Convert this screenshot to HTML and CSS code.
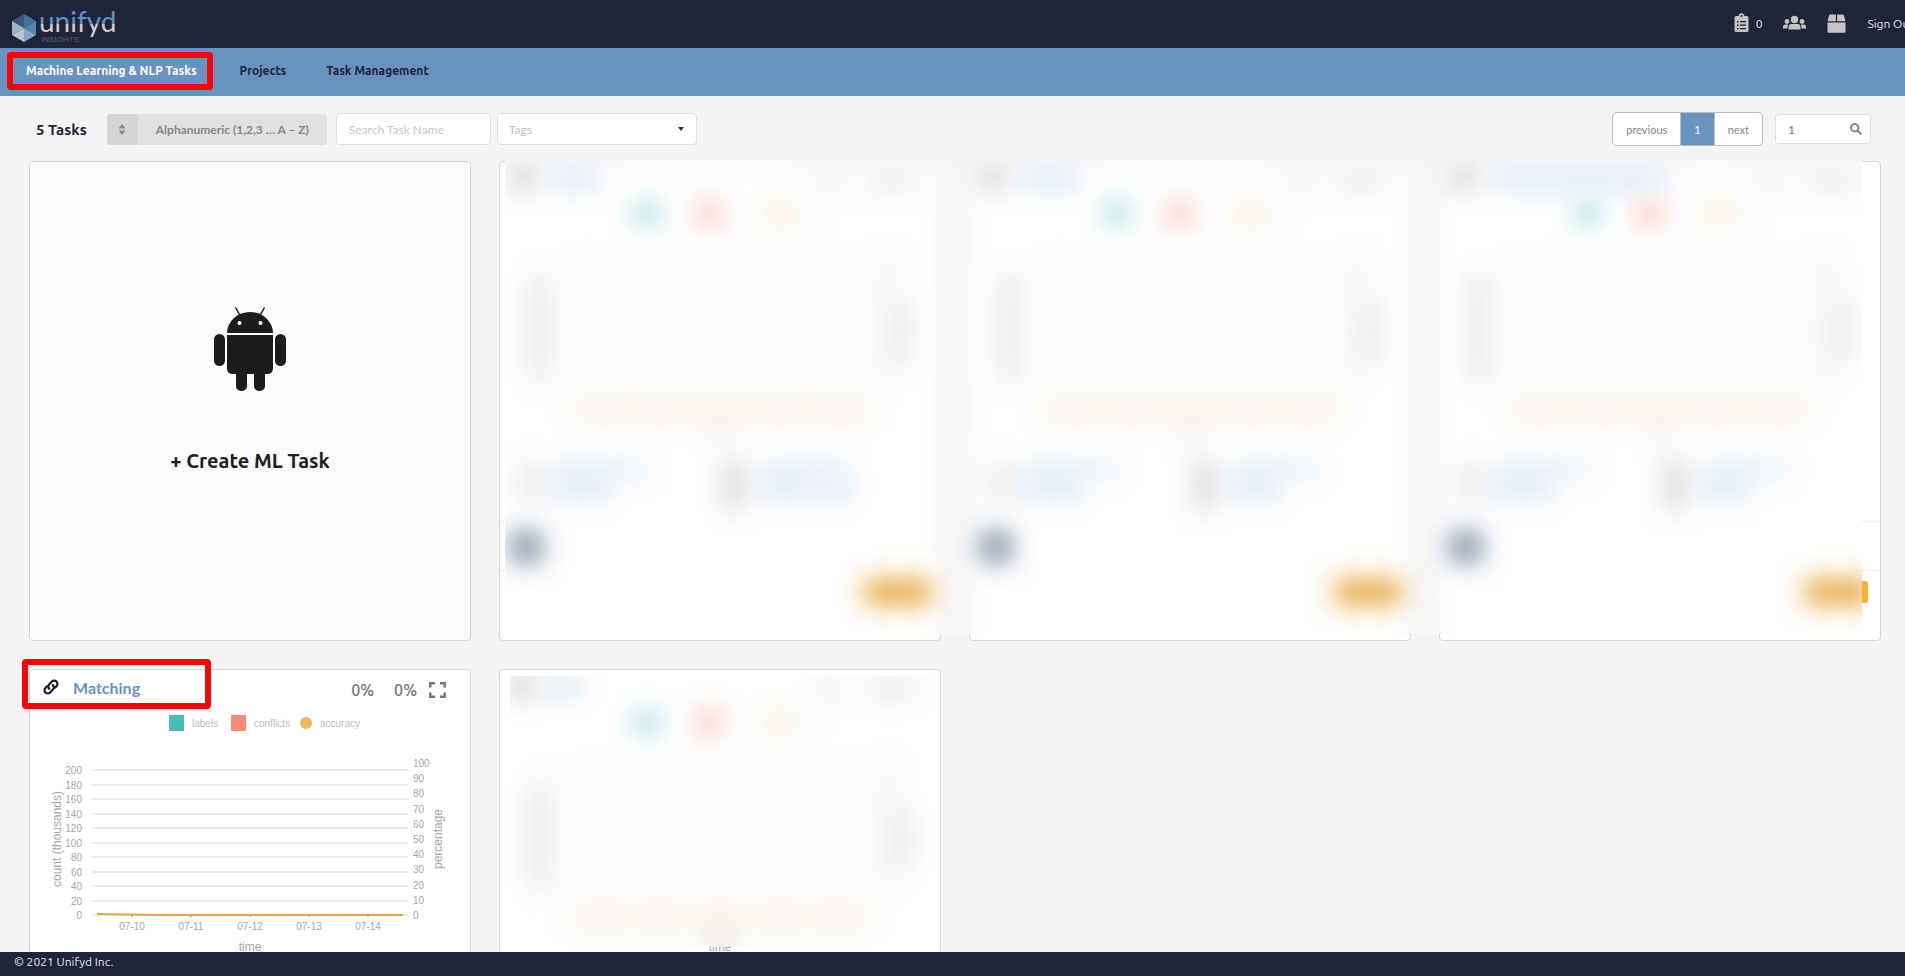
FILE: index.html
```html
<!DOCTYPE html>
<html lang="en">
<head>
<meta charset="utf-8">
<title>Unifyd Insights</title>
<link rel="stylesheet" href="styles.css">
</head>
<body>
<header class="topbar">
  <a class="logo" href="#" aria-label="Unifyd Insights">
    <svg width="110" height="44" viewBox="0 0 110 44">
      <defs>
        <linearGradient id="two-tone" gradientUnits="userSpaceOnUse" x1="0" y1="0" x2="0" y2="44">
          <stop offset="0.55" stop-color="#5b93c5"/><stop offset="0.55" stop-color="#cfcfd1"/>
        </linearGradient>
      </defs>
      <path fill="#34597c" d="M16 14v14L4 21z"/><path fill="#417199" d="M16 14l12 7-12 7z"/>
      <path fill="#a3b3c8" d="M4 21l12 7-12 7z"/><path fill="#5686b0" d="M28 21v14l-12-7z"/>
      <path fill="#b9c4d3" d="M4 35l12-7v14z"/><path fill="#86a5c5" d="M28 35l-12 7V28z"/>
      <text class="logo-name" x="31" y="32" fill="url(#two-tone)">unifyd</text>
      <text class="logo-sub" x="33" y="42">INSIGHTS</text>
    </svg>
  </a>
  <div class="actions">
    <a class="action count" href="#" aria-label="Tasks">
      <svg width="15" height="20" viewBox="0 0 15 20"><path fill="#c4c4c4" fill-rule="evenodd" d="M2 3h2.700a2.800 2.800 0 0 1 5.600 0H13q1.500 0 1.500 1.500v13Q14.500 19 13 19H2Q.5 19 .5 17.500v-13Q.5 3 2 3zM7.500 2a1 1 0 1 0 0 2 1 1 0 0 0 0-2zM3 8v1.500h1.500V8zM6 8v1.300h6V8zM3 11.500V13h1.500v-1.500zM6 11.500v1.300h6v-1.300zM3 15v1.500h1.500V15zM6 15v1.300h6V15z"/></svg>
      <span>0</span>
    </a>
    <a class="action" href="#" aria-label="Users">
      <svg width="23" height="16" viewBox="0 0 23 16"><g fill="#c4c4c4"><circle cx="11.500" cy="4.500" r="3.700"/><circle cx="4" cy="6.500" r="2.400"/><circle cx="19" cy="6.500" r="2.400"/><path d="M5.500 14.500V12q0-3 3-3h6q3 0 3 3v2.500zM0 13.500V12q0-2.500 2.500-2.500H5Q4.500 11 4.500 13.500zM23 13.500V12q0-2.500-2.500-2.500H18q.5 1.500.5 4z"/></g></svg>
    </a>
    <a class="action" href="#" aria-label="Packages">
      <svg width="19" height="19" viewBox="0 0 19 19"><path fill="#c4c4c4" d="M3.300.5h5.600v6.700H.5l1.500-5.600Q2.300.5 3.300.5zM10.100.5h5.600q1 0 1.300 1.100l1.500 5.600h-8.400zM.5 8.400h18v9q0 1.300-1.300 1.300H1.800q-1.300 0-1.300-1.300z"/></svg>
    </a>
    <a class="action" href="#">Sign Out</a>
  </div>
</header>

<nav class="tabs">
  <div class="tab-mark"><a class="tab active" href="#">Machine Learning &amp; NLP Tasks</a></div>
  <a class="tab" href="#">Projects</a>
  <a class="tab" href="#">Task Management</a>
</nav>

<main class="page">
  <div class="toolbar">
    <h1 class="total">5 Tasks</h1>
    <button class="sort" type="button">
      <span class="sort-icon"><svg width="8" height="11" viewBox="0 0 8 11"><path fill="#868788" d="M4 0l3.500 4.500h-7zM4 11L.5 6.500h7z"/></svg></span>
      <span class="sort-label">Alphanumeric (1,2,3 … A – Z)</span>
    </button>
    <input class="field search" type="text" placeholder="Search Task Name" aria-label="Search Task Name">
    <div class="select-wrap">
      <select class="field tags" aria-label="Tags"><option>Tags</option></select>
      <svg class="caret" width="6" height="5" viewBox="0 0 6 5"><path fill="#333" d="M0 0h6L3 4z"/></svg>
    </div>
    <div class="pager">
      <button type="button">previous</button>
      <button type="button" class="current">1</button>
      <button type="button">next</button>
    </div>
    <div class="goto">
      <input class="field" type="text" value="1" aria-label="Page number">
      <svg class="lens" width="12" height="12" viewBox="0 0 12 12"><path fill="none" stroke="#868686" stroke-width="2" d="M8.500 4.750a3.750 3.750 0 1 1-7.500 0 3.750 3.750 0 0 1 7.500 0zM7.500 7.500l3.800 3.800"/></svg>
    </div>
  </div>

  <svg class="symbols" width="0" height="0" aria-hidden="true">
    <defs>
      <filter id="soft" filterUnits="userSpaceOnUse" x="440" y="80" width="560" height="640" color-interpolation-filters="sRGB"><feGaussianBlur stdDeviation="13"/></filter>
      <filter id="edge" filterUnits="userSpaceOnUse" x="400" y="60" width="1600" height="740" color-interpolation-filters="sRGB"><feGaussianBlur stdDeviation="13"/></filter>
      <g id="hidden-chart">
        <rect x="570" y="255" width="316" height="140" fill="#fcfcfc" filter="url(#soft)"/>
        <g filter="url(#soft)">
          <rect x="637" y="204" width="20" height="20" fill="#7fd0c8"/>
          <rect x="699" y="204" width="20" height="20" fill="#f8aaa4"/>
          <circle cx="776" cy="214" r="9" fill="#f6dcab"/>
          <rect x="785" y="210" width="34" height="8" fill="#eee"/>
        </g>
        <g filter="url(#soft)" fill="#e3e3e3">
          <rect x="818" y="174" width="23" height="14"/>
          <rect x="866" y="174" width="50" height="14"/>
          <path d="M529 285h16v85h-16zM536 270h12v115h-12z"/>
          <rect x="884" y="250" width="12" height="130" fill="#f2f2f2"/>
          <rect x="895" y="302" width="14" height="58"/>
        </g>
        <g filter="url(#soft)">
          <rect x="568" y="402" width="306" height="16" fill="#faf2e3"/>
          <path fill="#e9e4dc" d="M588 410h28v9h-28zM647 410h28v9h-28zM706 410h28v9h-28zM765 410h28v9h-28zM824 410h28v9h-28zM708 429h24v9h-24z"/>
        </g>
      </g>
      <g id="hidden-card">
        <use href="#hidden-chart"/>
        <rect x="512" y="168" width="22" height="20" fill="#c0c0c0" filter="url(#soft)"/>
        <g filter="url(#soft)">
          <rect x="524" y="462" width="13" height="40" fill="#dadada"/>
          <rect x="727" y="460" width="14" height="50" fill="#c4c4c4"/>
          <path fill="#e2ebf5" d="M552 463h100v14h-40v25h-60zM759 463h92v14h-42v25h-50z"/>
        </g>
        <rect x="510" y="531" width="32" height="32" rx="3" fill="#8090a8" filter="url(#soft)"/>
        <rect x="864" y="579" width="68" height="26" rx="3" fill="#e7a943" filter="url(#soft)"/>
      </g>
    </defs>
  </svg>

  <section class="cards">
    <a class="card create" href="#">
      <svg width="74" height="86" viewBox="0 0 74 86">
        <g fill="#1b1c1d"><path d="M14 26a23 21 0 0 1 46 0z"/><path d="M14 28h46v33q0 6-6 6H20q-6 0-6-6z"/><rect x="1" y="27" width="11" height="32" rx="5.500"/><rect x="62" y="27" width="11" height="32" rx="5.500"/><rect x="23" y="58" width="11" height="26" rx="5"/><rect x="41" y="58" width="11" height="26" rx="5"/></g>
        <path stroke="#1b1c1d" stroke-width="1.500" d="M22.500.5l4.500 8M51.500.5l-4.500 8"/>
        <g fill="#fff"><circle cx="26.500" cy="16" r="2"/><circle cx="47.500" cy="16" r="2"/></g>
      </svg>
      <span>+ Create ML Task</span>
    </a>
    <article class="card second"><div class="card-row"></div><div class="card-foot"></div></article>
    <article class="card third"><div class="card-row"></div><div class="card-foot"></div></article>
    <article class="card fourth"><div class="card-row"></div><div class="card-foot"><span class="badge"></span></div></article>

    <div class="veil wide">
      <svg viewBox="505 160 1357 474" preserveAspectRatio="none" aria-hidden="true">
        <rect x="505" y="160" width="1357" height="474" fill="#f4f4f4"/>
        <g fill="#fff" filter="url(#edge)">
          <rect x="440" y="162" width="501" height="560"/><rect x="969" y="162" width="442" height="560"/><rect x="1439" y="162" width="500" height="560"/>
        </g>
        <use href="#hidden-card"/>
        <use href="#hidden-card" x="470"/>
        <use href="#hidden-card" x="940"/>
        <g filter="url(#edge)">
          <path fill="#cfdeef" d="M550 171h48v16h-48zM1020 171h58v16h-58zM1492 171h174v16h-174z"/>
          <rect x="809" y="477" width="42" height="25" fill="#e2ebf5"/>
        </g>
      </svg>
    </div>

    <article class="card match">
      <div class="card-head">
        <svg width="16" height="16" viewBox="0 0 16 16"><g fill="none" stroke="#1b1c1d" stroke-width="2.200" stroke-linecap="round"><path d="M6.300 9.800a3 3 0 0 1-.2-4.400l2.800-2.900a3.200 3.200 0 0 1 4.600 4.600l-1.600 1.600"/><path d="M9.700 6.200a3 3 0 0 1 .2 4.400l-2.800 2.900a3.200 3.200 0 0 1-4.600-4.600l1.600-1.600"/></g></svg>
        <a class="card-title" href="#">Matching</a>
        <span class="stat">0%</span><span class="stat">0%</span>
        <button class="expand" type="button" aria-label="Full screen"><svg width="17" height="16" viewBox="0 0 17 16"><path fill="none" stroke="#767676" stroke-width="2.500" d="M1.300 5.500V1.300H6M11 1.300h4.700v4.200M15.700 10.500v4.200H11M6 14.700H1.300v-4.200"/></svg></button>
      </div>
      <svg class="chart" viewBox="0 0 440 260" role="img" aria-label="Labels, conflicts and accuracy over time">
        <rect x="139" y="5" width="15" height="16" fill="#49bdb5"/><text x="162" y="17" class="key">labels</text>
        <rect x="201" y="5" width="15" height="16" fill="#f58b78"/><text x="224" y="17" class="key">conflicts</text>
        <circle cx="276" cy="13" r="6" fill="#efb95c"/><text x="290" y="17" class="key">accuracy</text>
        <path stroke="#ebebeb" stroke-width="2" d="M62 60h316M62 75h316M62 89h316M62 104h316M62 118h316M62 133h316M62 147h316M62 162h316M62 176h316M62 191h316M62 205h316"/>
        <path stroke="#bbb" stroke-width="2" d="M102 205v2M161 205v2M220 205v2M279 205v2M338 205v2"/>
        <path fill="none" stroke="#e7a63c" stroke-width="2" d="M67 204l60 1h246"/>
        <g class="tick end">
          <text x="52" y="64">200</text><text x="52" y="79">180</text><text x="52" y="93">160</text><text x="52" y="108">140</text><text x="52" y="122">120</text><text x="52" y="137">100</text><text x="52" y="151">80</text><text x="52" y="166">60</text><text x="52" y="180">40</text><text x="52" y="195">20</text><text x="52" y="209">0</text>
        </g>
        <g class="tick">
          <text x="383" y="57">100</text><text x="383" y="72">90</text><text x="383" y="87">80</text><text x="383" y="103">70</text><text x="383" y="118">60</text><text x="383" y="133">50</text><text x="383" y="148">40</text><text x="383" y="163">30</text><text x="383" y="179">20</text><text x="383" y="194">10</text><text x="383" y="209">0</text>
        </g>
        <g class="tick mid">
          <text x="102" y="220">07-10</text><text x="161" y="220">07-11</text><text x="220" y="220">07-12</text><text x="279" y="220">07-13</text><text x="338" y="220">07-14</text>
        </g>
        <g class="axis">
          <text x="220" y="241">time</text>
          <text transform="translate(31 129) rotate(-90)">count (thousands)</text>
          <text transform="translate(412 129) rotate(-90)">percentage</text>
        </g>
      </svg>
    </article>
    <article class="card sixth">
      <div class="card-head"></div>
      <svg class="chart" viewBox="0 0 440 260"><text class="axis" x="220" y="241">time</text></svg>
    </article>
    <div class="veil small">
      <svg viewBox="510 151 427 271" preserveAspectRatio="none" aria-hidden="true">
        <rect x="510" y="151" width="427" height="271" fill="#fff"/>
        <use href="#hidden-chart" y="-17"/>
        <rect x="508" y="153" width="26" height="18" fill="#c0c0c0" filter="url(#soft)"/>
        <rect x="546" y="155" width="36" height="14" fill="#cfdeef" filter="url(#soft)"/>
        <rect x="710" y="414" width="22" height="12" fill="#ddd" filter="url(#soft)"/>
      </svg>
    </div>
    <div class="title-mark"></div>
  </section>
</main>

<footer class="footer">© 2021 Unifyd Inc.</footer>
</body>
</html>
```

FILE: styles.css
```css
* { box-sizing: border-box; }

body {
  margin: 0;
  height: 100vh;
  display: flex;
  flex-direction: column;
  overflow: hidden;
  background: #f4f4f4;
  color: #1f2438;
  font-family: Ubuntu, "Open Sans", "Noto Sans", sans-serif;
  font-size: 12px;
}

a { color: inherit; text-decoration: none; }
button, input, select { font-family: Lato, sans-serif; font-size: 12px; }
svg { display: block; flex: none; }

.topbar {
  flex: none;
  height: 48px;
  display: flex;
  justify-content: space-between;
  padding-left: 8px;
  background: #1f2438;
  color: #e4e6ea;
  overflow: hidden;
}
.logo-name { font-family: Lato, sans-serif; font-size: 28px; }
.logo-sub { font-family: "Liberation Sans", sans-serif; font-size: 8px; fill: #5c5f6b; }

.actions {
  display: flex;
  align-items: center;
  gap: 21px;
  margin-right: -9px;
  padding-bottom: 2px;
  white-space: nowrap;
}
.action { display: flex; align-items: center; }
.count { gap: 7px; }

.tabs {
  flex: none;
  height: 48px;
  display: flex;
  align-items: flex-start;
  padding: 4px 7px;
  background: #6892c0;
  font-weight: 700;
}
.tab { display: block; padding: 6px 20px; line-height: 26px; white-space: nowrap; }
.tab-mark { border: 6px solid #f00; border-radius: 4px; margin-right: 7px; }
.tab-mark .tab { padding: 0 10px 0 13px; }
.active { color: #fff; }

.page { flex: 1; min-height: 0; overflow: hidden; }

.toolbar {
  display: flex;
  align-items: center;
  padding: 16px 34px 15px 36px;
}
.total { margin: 0 20px 0 0; font-size: 15px; font-weight: 700; }

.sort {
  display: flex;
  align-items: stretch;
  height: 31px;
  width: 220px;
  margin-right: 9px;
  padding: 0;
  border: 0;
  border-radius: 4px;
  overflow: hidden;
  background: #e0e1e2;
  color: #868788;
  font-weight: 700;
}
.sort-icon { display: flex; align-items: center; justify-content: center; width: 31px; background: #d4d5d6; }
.sort-label { flex: 1; align-self: center; white-space: nowrap; }

.field {
  height: 32px;
  padding: 0 12px;
  border: 1px solid #dededf;
  border-radius: 4px;
  background: #fff;
  color: #767676;
}
.field::placeholder { color: #c7c7c7; }
.search { width: 155px; margin-right: 6px; }
.select-wrap, .goto { position: relative; }
.tags { width: 200px; padding: 0 11px; appearance: none; color: #bfbfbf; }
.caret { position: absolute; right: 13px; top: 14px; }

.pager {
  display: flex;
  height: 34px;
  margin-left: auto;
  margin-right: 12px;
  border: 1px solid #bbb;
  border-radius: 5px;
  background: #fff;
  overflow: hidden;
}
.pager button { padding: 0 13px; border: 0; background: none; color: #868686; font-size: 11px; }
.pager .current { border: solid #bbb; border-width: 0 1px; background: #6892c0; color: #fff; }
.goto .field { display: block; width: 96px; height: 30px; }
.lens { position: absolute; right: 9px; top: 9px; }

.symbols { position: absolute; }

.cards {
  display: grid;
  grid-template-columns: repeat(4, 1fr);
  grid-auto-rows: 480px;
  gap: 28px;
  padding: 0 24px 28px 29px;
}
.card {
  display: flex;
  flex-direction: column;
  border: 1px solid #d4d4d5;
  border-radius: 4px;
  background: #fff;
}
.create {
  grid-area: 1 / 1;
  align-items: center;
  justify-content: center;
  gap: 56px;
  padding-bottom: 24px;
  background: #fbfbfb;
  color: #212121;
  font-size: 20px;
  font-weight: 700;
}
.second { grid-area: 1 / 2; }
.third { grid-area: 1 / 3; }
.fourth { grid-area: 1 / 4; }
.match { grid-area: 2 / 1; }
.sixth { grid-area: 2 / 2; }
.card-row { height: 50px; margin-top: auto; border: solid #ebebeb; border-width: 1px 0; }
.card-foot { display: flex; justify-content: flex-end; height: 69px; padding: 10px 12px; }
.badge { width: 70px; height: 22px; border-radius: 3px; background: #fbb03b; }

.veil { z-index: 1; overflow: hidden; }
.veil svg { width: 100%; height: 100%; }
.wide { grid-area: 1 / 2 / 2 / 5; margin: -1px 19px 7px 6px; }
.small { grid-area: 2 / 2; height: 271px; margin: 7px 4px 0 11px; }

.card-head { display: flex; align-items: center; height: 40px; padding: 0 24px 0 13px; }
.card-title { margin: 0 auto 6px 14px; color: #6892c0; font-family: Lato, sans-serif; font-size: 16px; font-weight: 700; }
.card-head > svg { margin-bottom: 6px; }
.stat { margin-left: 20px; color: #767676; font-size: 16px; font-weight: 500; }
.expand { margin-left: 12px; padding: 0; border: 0; background: none; }

.chart { width: 100%; height: auto; font-family: "Liberation Sans", sans-serif; }
.key { font-size: 10px; fill: #bdbdbd; }
.tick { font-size: 10px; fill: #a6a6a6; }
.end { text-anchor: end; }
.mid, .axis { text-anchor: middle; }
.axis { font-size: 12px; fill: #a6a6a6; }

.title-mark {
  grid-area: 2 / 1;
  z-index: 2;
  width: 189px;
  height: 50px;
  margin: -10px 0 0 -7px;
  border: 6px solid #f00;
  border-radius: 4px;
  pointer-events: none;
}

.footer {
  flex: none;
  z-index: 3;
  height: 24px;
  padding-left: 14px;
  background: #1f2438;
  color: #e4e6ea;
  line-height: 20px;
}
```
